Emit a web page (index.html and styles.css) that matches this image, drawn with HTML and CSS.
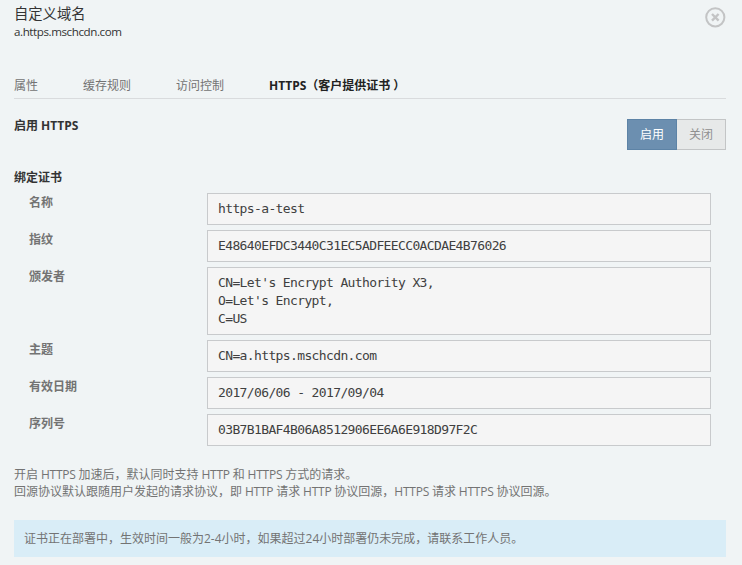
FILE: index.html
```html
<!DOCTYPE html>
<html lang="zh-CN">
<head>
<meta charset="utf-8">
<title>自定义域名</title>
<link rel="stylesheet" href="styles.css">
</head>
<body>
<header class="header">
  <div>
    <h1 class="title">自定义域名</h1>
    <div class="domain">a.https.mschcdn.com</div>
  </div>
  <svg class="close" width="22" height="22" viewBox="0 0 22 22" fill="none" stroke="#c3c4c5">
    <circle cx="11.3" cy="11.3" r="9.1" stroke-width="2"/>
    <path d="M8 8l6.6 6.6M14.6 8l-6.6 6.6" stroke-width="2.4"/>
  </svg>
</header>
<nav class="tabs">
  <span class="tab">属性</span>
  <span class="tab">缓存规则</span>
  <span class="tab">访问控制</span>
  <span class="tab active">HTTPS（客户提供证书<span class="closing">）</span></span>
</nav>
<section class="enable">
  <h2 class="heading">启用 HTTPS</h2>
  <div class="switch"><span class="option on">启用</span><span class="option off">关闭</span></div>
</section>
<h2 class="heading bind">绑定证书</h2>
<dl class="cert">
  <dt>名称</dt><dd>https-a-test</dd>
  <dt>指纹</dt><dd>E48640EFDC3440C31EC5ADFEECC0ACDAE4B76026</dd>
  <dt>颁发者</dt><dd>CN=Let's Encrypt Authority X3,<br>O=Let's Encrypt,<br>C=US</dd>
  <dt>主题</dt><dd>CN=a.https.mschcdn.com</dd>
  <dt>有效日期</dt><dd>2017/06/06 - 2017/09/04</dd>
  <dt>序列号</dt><dd>03B7B1BAF4B06A8512906EE6A6E918D97F2C</dd>
</dl>
<div class="notes">
  <p>开启<span class="latin"> HTTPS </span>加速后，默认同时支持<span class="latin"> HTTP </span>和<span class="latin"> HTTPS </span>方式的请求。</p>
  <p>回源协议默认跟随用户发起的请求协议，即<span class="latin"> HTTP </span>请求<span class="latin"> HTTP </span>协议回源，<span class="latin">HTTPS </span>请求<span class="latin"> HTTPS </span>协议回源。</p>
</div>
<div class="alert">证书正在部署中，生效时间一般为2-4小时，如果超过24小时部署仍未完成，请联系工作人员。</div>
</body>
</html>
```
FILE: styles.css
```css
* { box-sizing: border-box; }
html { overflow: hidden; }
body {
  margin: 0;
  padding: 5px 16px 0 14px;
  height: 565px;
  background: #f0f4f5;
  color: #737373;
  font: 12px/17px "Open Sans", "Noto Sans CJK SC", sans-serif;
  white-space: nowrap;
}
h1, h2, p, dl, dd { margin: 0; }
.header { display: flex; justify-content: space-between; height: 67px; }
.title { font-size: 14.3px; line-height: 18px; font-weight: 400; color: #333; }
.domain { color: #333; line-height: 18px; font-size: 11.6px; letter-spacing: -.42px; }
.close { margin: 1px 0 0; }
.tabs { display: flex; gap: 45px; height: 27px; padding-top: 5px; border-bottom: 1px solid #d9dbdd; }
.active { color: #222; font-weight: 700; }
.latin { letter-spacing: -.23px; }
.closing { padding-left: 3px; }
.enable { display: flex; justify-content: space-between; height: 69px; padding-top: 20px; }
.heading { font-size: 12px; line-height: 14px; font-weight: 700; color: #333; }
.switch { display: flex; width: 99px; height: 31px; }
.option { line-height: 29px; text-align: center; border: 1px solid #c3c5c6; }
.on { width: 50px; background: #6c8fb0; border-color: #5d83a6; color: #fff; }
.off { width: 49px; border-left: 0; background: #e7e9e9; color: #909090; }
.bind { height: 25px; line-height: 19px; }
.cert { display: grid; grid-template-columns: 178px 504px; row-gap: 5px; padding-left: 15px; }
.cert dt { line-height: 19px; font-weight: 700; }
.cert dd {
  padding: 6px 10px;
  background: #f5f5f5;
  border: 1px solid #c8cacc;
  color: #404040;
  font: 13px/18px "DejaVu Sans Mono", monospace;
  letter-spacing: -.626px;
}
.notes { margin-top: 20px; height: 54px; }
.alert { height: 37px; padding: 0 10px; line-height: 37px; background: #d9edf7; }
```
